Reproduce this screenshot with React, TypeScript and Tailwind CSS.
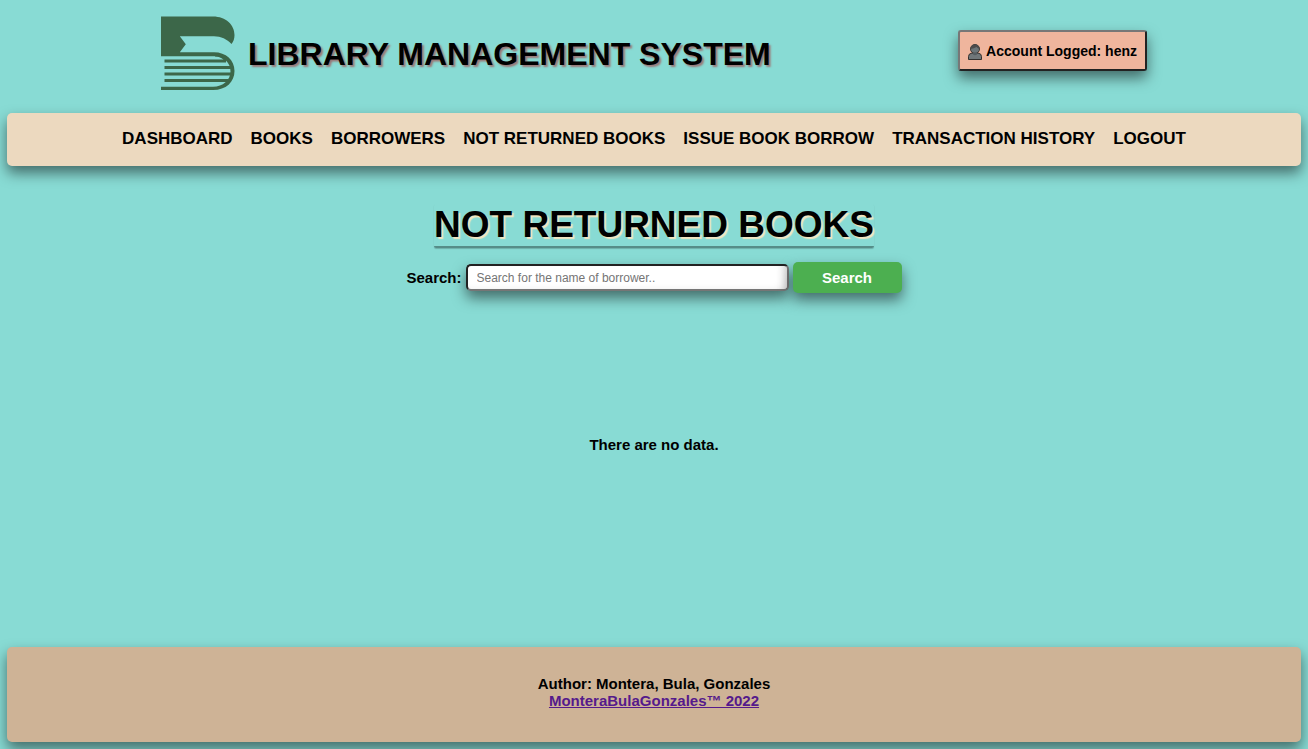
const links = [
  'DASHBOARD',
  'BOOKS',
  'BORROWERS',
  'NOT RETURNED BOOKS',
  'ISSUE BOOK BORROW',
  'TRANSACTION HISTORY',
  'LOGOUT',
];

function Logo() {
  return (
    <svg className="h-[75px] w-[75px] shrink-0" viewBox="0 0 75 75" fill="none" aria-hidden="true">
      <path
        fill="#3c6749"
        d="M0 .5H52C65 .5 73.500 9 73.500 19C73.500 22.500 72.500 25.500 70.500 28C66 23 60 20.200 53 20.200H18.800L24.800 28.200L18.800 36.200H53C65 36.200 73.500 44 73.500 55C73.500 66 65 74 52 74H0V70.800H52C62 70.800 69.500 64 69.500 55.500C69.500 47 63 40.200 54 40.200H0Z"
      />
      <path stroke="#3c6749" strokeWidth="2.8" d="M3.500 45H65M3.500 51.500H70M3.500 58H70M3.500 64.500H67" />
      <path stroke="#3c6749" strokeWidth="1.5" d="M54 39.800Q61 40 64 44.500" />
    </svg>
  );
}

function Person() {
  return (
    <svg className="h-4 w-3.5" viewBox="0 0 14 16" aria-hidden="true">
      <path d="M.5 15.500V12.500Q.5 9.500 4 9H10Q13.500 9.500 13.500 12.500V15.500Z" fill="#70777a" stroke="#34312f" />
      <circle cx="7" cy="5" r="4.500" fill="#6c7579" stroke="#403935" />
      <path d="M2.500 5Q2.500 .5 7 .5T11.500 5Q10 4.500 8.500 3Q6 4.500 2.500 5Z" fill="#4b4b4c" />
      <path d="M5 8.500h4v2q-2 1.500-4 0Z" fill="#555c60" />
    </svg>
  );
}

export default function App() {
  return (
    <div className="flex min-h-screen flex-col bg-[#88dbd4] px-[7px] pb-[7px] font-['Liberation_Sans',Arial,sans-serif] text-[15px] leading-[17px] font-bold text-black">
      <header className="flex h-[113px] items-start justify-between px-[154px] pt-4">
        <div className="flex items-center gap-3">
          <Logo />
          <h1 className="text-[32px] leading-9 [text-shadow:2px_2px_2px_#9b7777]">LIBRARY MANAGEMENT SYSTEM</h1>
        </div>
        <button
          type="button"
          className="mt-3.5 flex h-[41px] items-center gap-1 rounded-[3px] border-2 border-[#222] border-t-[#777] border-l-[#777] bg-[#efb59d] px-2 pt-0.5 text-[14px] shadow-[0_7px_14px_rgba(0,0,0,0.5)]"
        >
          <Person />
          Account Logged: henz
        </button>
      </header>

      <nav className="flex h-[53px] items-center justify-center gap-[18px] rounded-[5px] bg-[#ecd9bf] pb-0.5 text-[17px] shadow-[0_7px_14px_rgba(0,0,0,0.5)]">
        {links.map((label) => (
          <a key={label} href="#" className="whitespace-nowrap">
            {label}
          </a>
        ))}
      </nav>

      <main className="flex flex-1 flex-col items-center pt-[38px]">
        <h2 className="rounded-[2px] border-b-2 border-[#568d88] text-[37px] leading-[42px] shadow-[0_1px_1px_rgba(0,0,0,0.2)] [text-shadow:2px_2px_1px_#f2e6c2]">
          NOT RETURNED BOOKS
        </h2>
        <form className="mt-3.5 flex items-center gap-1" onSubmit={(event) => event.preventDefault()}>
          <label htmlFor="borrower">Search:</label>
          <input
            id="borrower"
            type="text"
            placeholder="Search for the name of borrower.."
            className="h-[27px] w-[323px] rounded-[5px] border-2 border-[#767676] border-t-[#222] border-l-[#222] bg-white px-[9px] text-[12px] font-normal shadow-[0_7px_14px_rgba(0,0,0,0.5),inset_-8px_-2px_10px_-6px_rgba(0,0,0,0.2)] placeholder:text-[#757575]"
          />
          <button
            type="submit"
            className="h-[31px] w-[109px] rounded-[5px] bg-[#4caf50] text-white shadow-[0_7px_14px_rgba(0,0,0,0.5)]"
          >
            Search
          </button>
        </form>
        <p className="mt-[143px]">There are no data.</p>
      </main>

      <footer className="flex h-[95px] flex-col items-center rounded-[5px] bg-[#ceb396] pt-7 shadow-[0_7px_14px_rgba(0,0,0,0.5)]">
        <p>Author: Montera, Bula, Gonzales</p>
        <a href="#" className="text-[#551a8b] underline">
          MonteraBulaGonzales™ 2022
        </a>
      </footer>
    </div>
  );
}
